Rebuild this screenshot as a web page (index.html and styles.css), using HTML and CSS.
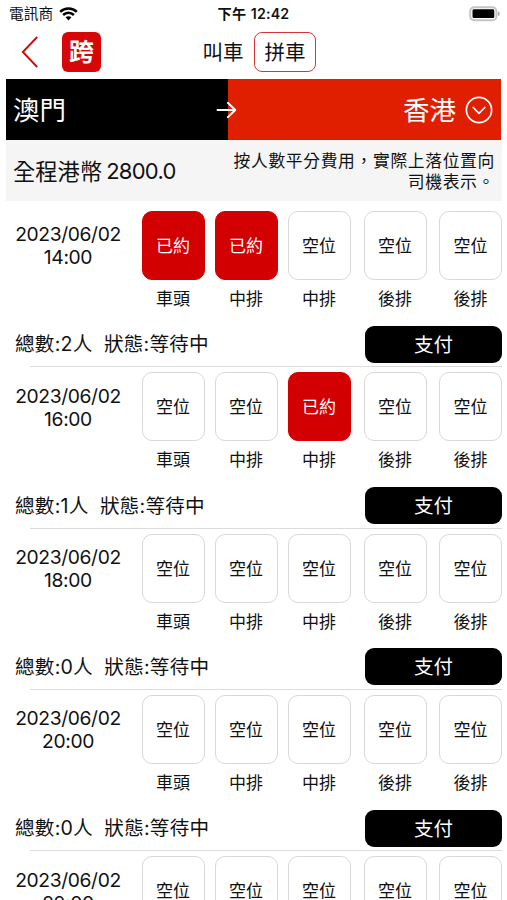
FILE: index.html
```html
<!DOCTYPE html>
<html lang="zh-Hant">
<head>
<meta charset="utf-8">
<title>拼車</title>
<link rel="stylesheet" href="styles.css">
</head>
<body>
<header class="status">
  <div class="carrier"><span>電訊商</span>
    <svg width="19" height="14" viewBox="0 0 19 14" fill="none" stroke="#000" stroke-width="2.5"><path d="M1.2 4.9C5.8.5 13.2.5 17.8 4.9M4.1 8c3.1-2.9 7.7-2.9 10.8 0"/><path d="M6.6 10.3c1.7-1.4 4.1-1.4 5.8 0L9.5 13.4z" fill="#000" stroke="none"/></svg>
  </div>
  <div class="clock">下午 12:42</div>
  <svg class="battery" width="32" height="16" viewBox="0 0 32 16"><rect x="1.2" y="1.2" width="26.2" height="13" rx="4" fill="#fff" stroke="#c4c4c4" stroke-width="2"/><rect x="3.5" y="3.3" width="21.8" height="8.8" rx="1.4"/><path d="M28.8 5.3q2 .7 2 2.4t-2 2.4z" fill="#aaa"/></svg>
</header>
<nav class="nav">
  <svg class="back" width="18" height="32" viewBox="0 0 18 32" fill="none" stroke="#d00a0a" stroke-width="1.9"><path d="M16.2 1L1.8 16l14.4 15"/></svg>
  <div class="logo">跨</div>
  <div class="tabs"><span class="tab">叫車</span><span class="tab tab-active">拼車</span></div>
</nav>
<section class="route">
  <div class="from"><span>澳門</span>
    <svg class="arrow" width="22" height="18" viewBox="0 0 22 18" fill="none" stroke="#fff" stroke-width="1.9"><path d="M1.5 9H19M11.8 1.8L19.3 9l-7.5 7.2" stroke-linecap="round" stroke-linejoin="round"/></svg>
  </div>
  <div class="to"><span>香港</span>
    <svg width="28" height="28" viewBox="0 0 28 28" fill="none" stroke="#fff" stroke-width="1.7" stroke-linecap="round" stroke-linejoin="round"><circle cx="14" cy="14" r="12.6"/><path d="M8.2 11.5l5.8 5.8 5.8-5.8"/></svg>
  </div>
</section>
<section class="fare">
  <div class="price">全程港幣<span class="amount">2800.0</span></div>
  <div class="note">按人數平分費用，實際上落位置向<br>司機表示。</div>
</section>
<main class="trips" id="trips"></main>
<script src="app.js"></script>
</body>
</html>
```
FILE: styles.css
```css
* { box-sizing: border-box; }
html, body { margin: 0; height: 900px; overflow: hidden; }
body {
  background: #fff;
  color: #111;
  font-family: Inter, "Noto Sans CJK TC", sans-serif;
  display: flex;
  flex-direction: column;
}
svg { display: block; flex: none; }
.status {
  height: 28px;
  flex: none;
  display: grid;
  grid-template-columns: 1fr 72px 1fr;
  align-items: center;
  padding: 0 6px 0 9px;
}
.carrier { display: flex; align-items: center; gap: 6px; font-size: 14.7px; line-height: 20px; white-space: nowrap; }
.clock { font-size: 14.2px; font-weight: 600; letter-spacing: .2px; word-spacing: .6px; line-height: 20px; white-space: nowrap; text-align: center; margin-left: -3px; }
.battery { justify-self: end; }
.nav { height: 51px; flex: none; display: flex; align-items: flex-start; padding: 4px 0 0 21px; }
.back { margin-top: 4px; }
.logo {
  width: 39px;
  height: 40px;
  margin-left: 23px;
  border-radius: 6px;
  background: #d50707;
  color: #fff;
  font-size: 25px;
  font-weight: 700;
  line-height: 41px;
  text-align: center;
}
.tabs { display: flex; margin-left: 91px; }
.tab { width: 62px; height: 40px; line-height: 42px; text-align: center; font-size: 20.5px; border-radius: 8px; }
.tab-active { border: 1.5px solid #d93434; line-height: 40px; }
.route { height: 61px; flex: none; display: flex; margin: 0 6px; color: #fff; font-size: 26.5px; }
.from, .to { display: flex; align-items: center; line-height: 61px; }
.from span, .to span { padding-top: 2px; }
.from { width: 222px; background: #000; padding-left: 7px; justify-content: space-between; }
.arrow { position: relative; left: 10px; }
.to { flex: 1; background: #df1f00; justify-content: flex-end; gap: 9px; padding-right: 8px; }
.fare { height: 61px; flex: none; margin: 0 5px 0 6px; background: #f5f5f5; display: flex; justify-content: space-between; }
.price { display: flex; font-size: 22.3px; line-height: 63px; padding-left: 7px; white-space: nowrap; }
.amount { margin-left: 4px; font-size: 22px; letter-spacing: -.75px; }
.note { padding: 11px 7px 0 0; font-size: 16.8px; letter-spacing: .65px; line-height: 21px; text-align: right; white-space: nowrap; }
.trips { flex: 1; min-height: 0; overflow: hidden; padding-top: 5.2px; }
.trip { height: 161.3px; padding: 4.8px 5px 0 12px; display: flex; flex-direction: column; }
.schedule { display: flex; height: 114.8px; }
.date { width: 112px; margin-right: 17.5px; padding-top: 12.4px; text-align: center; font-size: 19.3px; letter-spacing: -.38px; line-height: 23px; }
.seats { display: grid; grid-template-columns: 73px 73px 76px 75.5px 63px; }
.seat { width: 63px; text-align: center; font-size: 17px; }
.box { height: 69px; border: 1.3px solid #d8d8d8; border-radius: 10px; line-height: 69px; }
.booked { background: #d20000; border-color: #d20000; color: #fff; }
.label { line-height: 24px; margin-top: 7px; }
.summary { display: flex; justify-content: space-between; align-items: center; height: 37px; padding-left: 3px; }
.total { font-size: 19.6px; letter-spacing: .22px; line-height: 37px; padding-top: 1px; white-space: pre; }
.pay { width: 137px; height: 37px; border-radius: 9px; background: #000; color: #fff; font-size: 19.5px; line-height: 38px; text-align: center; }
.divider { height: 1px; background: #dcdcdc; margin: 3.7px 0 0 18px; flex: none; }
```
FILE: app.js
```js
const positions = ['車頭', '中排', '中排', '後排', '後排'];
const trips = [
  { time: '14:00', booked: [0, 1] },
  { time: '16:00', booked: [2] },
  { time: '18:00', booked: [] },
  { time: '20:00', booked: [] },
  { time: '22:00', booked: [] }
];

// The two seats of the first trip belong to the same party as its total.
document.getElementById('trips').innerHTML = trips.map(trip => `
  <article class="trip">
    <div class="schedule">
      <div class="date">2023/06/02<br>${trip.time}</div>
      <div class="seats">${positions.map((label, i) => {
        const taken = trip.booked.includes(i);
        return `<div class="seat"><div class="box${taken ? ' booked' : ''}">${taken ? '已約' : '空位'}</div><div class="label">${label}</div></div>`;
      }).join('')}</div>
    </div>
    <div class="summary">
      <div class="total">總數:${trip.booked.length}人  狀態:等待中</div>
      <div class="pay">支付</div>
    </div>
    <div class="divider"></div>
  </article>`).join('');
```
